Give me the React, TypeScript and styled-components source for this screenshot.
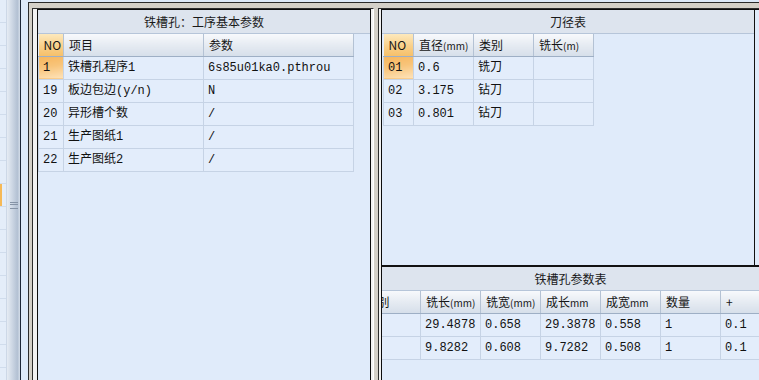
import React from "react";
import styled, { createGlobalStyle } from "styled-components";

const GlobalStyle = createGlobalStyle`
  html, body {
    margin: 0;
    padding: 0;
    background: #dde9f8;
  }
  body {
    font-family: "Liberation Mono", "Noto Sans CJK SC", monospace;
    font-size: 12px;
    color: #111;
  }
`;

const Root = styled.div`
  display: flex;
  width: 759px;
  height: 380px;
  overflow: hidden;
`;

const SideList = styled.div`
  width: 7px;
  flex-shrink: 0;
  display: flex;
  flex-direction: column;
  background: #e4edf9;
  border-right: 1px solid #cdd8e7;
  box-sizing: border-box;
`;

const SideRow = styled.div<{ $active?: boolean }>`
  height: 22px;
  flex-shrink: 0;
  border-bottom: 1px solid #d0dcec;
  background: ${(p) =>
    p.$active
      ? "linear-gradient(to right, #f6b957 0, #f6b957 2px, #e4edf9 2px)"
      : "transparent"};
`;

const Splitter = styled.div`
  width: 13px;
  flex-shrink: 0;
  display: flex;
  align-items: center;
  justify-content: center;
  background: linear-gradient(
    to right,
    #e6ecf4,
    #cdd7e4 40%,
    #b3c1d3 80%,
    #d5dee9
  );
  border-right: 1px solid #1d2636;
`;

const Grip = styled.div`
  margin-top: 30px;
  width: 8px;
  height: 5px;
  border-top: 1px solid #8593a6;
  border-bottom: 1px solid #8593a6;
  position: relative;
  &::after {
    content: "";
    position: absolute;
    left: 0;
    right: 0;
    top: 1px;
    border-top: 1px solid #8593a6;
  }
`;

const Workspace = styled.div`
  flex: 1;
  min-width: 0;
  padding: 2px 0 0 7px;
  background: #dde9f8;
`;

const Frame = styled.div`
  height: 100%;
  box-sizing: border-box;
  display: flex;
  gap: 4px;
  padding: 5px 0 0 3px;
  background: #d4d0c8;
  border-top: 1px solid #2a2a2a;
  border-left: 1px solid #2a2a2a;
`;

const PanelOuter = styled.div<{ $w: number; $pad: number }>`
  width: ${(p) => p.$w}px;
  flex-shrink: 0;
  box-sizing: border-box;
  display: flex;
  padding: 0 2px 0 ${(p) => p.$pad}px;
  background: #f2f2f2;
  border-top: 1px solid #2d2d2d;
  border-left: 1px solid #2d2d2d;
  border-right: 1px solid #ffffff;
`;

const PanelInner = styled.div`
  flex: 1;
  min-width: 0;
  display: flex;
  flex-direction: column;
  background: #e0ebfa;
  border: 1px solid #0d0d0d;
  border-bottom: none;
`;

const RightInner = styled(PanelInner)`
  border-right: none;
`;

const Pane = styled.div<{ $h?: number; $w: number; $edge?: boolean }>`
  width: ${(p) => p.$w}px;
  ${(p) => (p.$h ? `height: ${p.$h}px; flex-shrink: 0;` : "flex: 1;")}
  display: flex;
  flex-direction: column;
  background: #e0ebfa;
  box-sizing: border-box;
  overflow: hidden;
  ${(p) => (p.$edge ? "border-right: 1px solid #111;" : "")}
`;

const Divider = styled.div`
  height: 2px;
  background: #111;
  flex-shrink: 0;
`;

const TitleBar = styled.div`
  height: 23px;
  flex-shrink: 0;
  display: flex;
  align-items: center;
  justify-content: center;
  background: #dde4ee;
  border-bottom: 1px solid #b6c5d9;
  font-family: "Noto Sans CJK SC", "Liberation Sans", sans-serif;
  font-size: 12px;
  line-height: 1;
  color: #1a1a1a;
`;

const GridWrap = styled.div<{ $shift?: number; $inset?: number }>`
  display: flex;
  padding-left: ${(p) => p.$inset || 0}px;
  margin-left: ${(p) => -(p.$shift || 0)}px;
`;

const Grid = styled.table<{ $w: number }>`
  width: ${(p) => p.$w}px;
  flex-shrink: 0;
  border-collapse: collapse;
  table-layout: fixed;
  background: #e3edfb;
`;

const Col = styled.col<{ $w: number }>`
  width: ${(p) => p.$w}px;
`;

const Th = styled.th<{ $no?: boolean }>`
  height: 22px;
  padding: 0 5px;
  box-sizing: border-box;
  text-align: left;
  font-weight: normal;
  font-family: "Noto Sans CJK SC", "Liberation Sans", sans-serif;
  font-size: 12px;
  line-height: 1;
  color: #151515;
  white-space: nowrap;
  overflow: hidden;
  background: ${(p) =>
    p.$no
      ? "linear-gradient(#fde9bd, #f9d08a 55%, #f6c06a)"
      : "linear-gradient(#f7f9fc, #e6ebf2 50%, #d6dfea)"};
  border-right: 1px solid #b4c2d4;
  border-bottom: 1px solid #9eafc5;
`;

const Unit = styled.span`
  font-size: 10px;
`;

const Td = styled.td<{ $sel?: boolean }>`
  height: 23px;
  padding: 0 4px;
  box-sizing: border-box;
  white-space: nowrap;
  overflow: hidden;
  font-family: "Liberation Mono", "Noto Sans CJK SC", monospace;
  font-size: 12px;
  line-height: 1;
  color: #111;
  border: 1px solid #c6d3e5;
  border-top: none;
  background: ${(p) =>
    p.$sel
      ? "linear-gradient(170deg, #f7b65c 0%, #f8c47a 45%, #fde3bb 100%)"
      : "transparent"};
`;

const paramRows = [
  ["1", "铁槽孔程序1", "6s85u01ka0.pthrou"],
  ["19", "板边包边(y/n)", "N"],
  ["20", "异形槽个数", "/"],
  ["21", "生产图纸1", "/"],
  ["22", "生产图纸2", "/"],
];

const toolRows = [
  ["01", "0.6", "铣刀", ""],
  ["02", "3.175", "钻刀", ""],
  ["03", "0.801", "钻刀", ""],
];

const slotRows = [
  ["", "29.4878", "0.658", "29.3878", "0.558", "1", "0.1"],
  ["", "9.8282", "0.608", "9.7282", "0.508", "1", "0.1"],
];

export default function App() {
  const side = Array.from({ length: 17 }, (_, i) => i);
  return (
    <>
      <GlobalStyle />
      <Root>
        <SideList>
          {side.map((i) => (
            <SideRow key={i} $active={i === 8} />
          ))}
        </SideList>
        <Splitter>
          <Grip />
        </Splitter>
        <Workspace>
          <Frame>
            <PanelOuter $w={342} $pad={4}>
              <PanelInner>
                <TitleBar>铁槽孔：工序基本参数</TitleBar>
                <GridWrap>
                  <Grid $w={315}>
                    <colgroup>
                      <Col $w={25} />
                      <Col $w={140} />
                      <Col $w={150} />
                    </colgroup>
                    <thead>
                      <tr>
                        <Th $no>NO</Th>
                        <Th>项目</Th>
                        <Th>参数</Th>
                      </tr>
                    </thead>
                    <tbody>
                      {paramRows.map((r, i) => (
                        <tr key={r[0]}>
                          <Td $sel={i === 0}>{r[0]}</Td>
                          <Td>{r[1]}</Td>
                          <Td>{r[2]}</Td>
                        </tr>
                      ))}
                    </tbody>
                  </Grid>
                </GridWrap>
              </PanelInner>
            </PanelOuter>
            <PanelOuter $w={440} $pad={2}>
              <RightInner>
                <Pane $w={373} $h={255} $edge>
                  <TitleBar>刀径表</TitleBar>
                  <GridWrap $inset={1}>
                    <Grid $w={210}>
                      <colgroup>
                        <Col $w={30} />
                        <Col $w={60} />
                        <Col $w={60} />
                        <Col $w={60} />
                      </colgroup>
                      <thead>
                        <tr>
                          <Th $no>NO</Th>
                          <Th>
                            直径<Unit>(mm)</Unit>
                          </Th>
                          <Th>类别</Th>
                          <Th>
                            铣长<Unit>(m)</Unit>
                          </Th>
                        </tr>
                      </thead>
                      <tbody>
                        {toolRows.map((r, i) => (
                          <tr key={r[0]}>
                            <Td $sel={i === 0}>{r[0]}</Td>
                            <Td>{r[1]}</Td>
                            <Td>{r[2]}</Td>
                            <Td>{r[3]}</Td>
                          </tr>
                        ))}
                      </tbody>
                    </Grid>
                  </GridWrap>
                </Pane>
                <Divider />
                <Pane $w={377}>
                  <TitleBar>铁槽孔参数表</TitleBar>
                  <GridWrap $shift={22}>
                    <Grid $w={420}>
                      <colgroup>
                        {[0, 1, 2, 3, 4, 5, 6].map((c) => (
                          <Col key={c} $w={60} />
                        ))}
                      </colgroup>
                      <thead>
                        <tr>
                          <Th>类别</Th>
                          <Th>
                            铣长<Unit>(mm)</Unit>
                          </Th>
                          <Th>
                            铣宽<Unit>(mm)</Unit>
                          </Th>
                          <Th>
                            成长<Unit>mm</Unit>
                          </Th>
                          <Th>
                            成宽<Unit>mm</Unit>
                          </Th>
                          <Th>数量</Th>
                          <Th>+</Th>
                        </tr>
                      </thead>
                      <tbody>
                        {slotRows.map((r) => (
                          <tr key={r[1]}>
                            {r.map((v, j) => (
                              <Td key={j}>{v}</Td>
                            ))}
                          </tr>
                        ))}
                      </tbody>
                    </Grid>
                  </GridWrap>
                </Pane>
              </RightInner>
            </PanelOuter>
          </Frame>
        </Workspace>
      </Root>
    </>
  );
}
